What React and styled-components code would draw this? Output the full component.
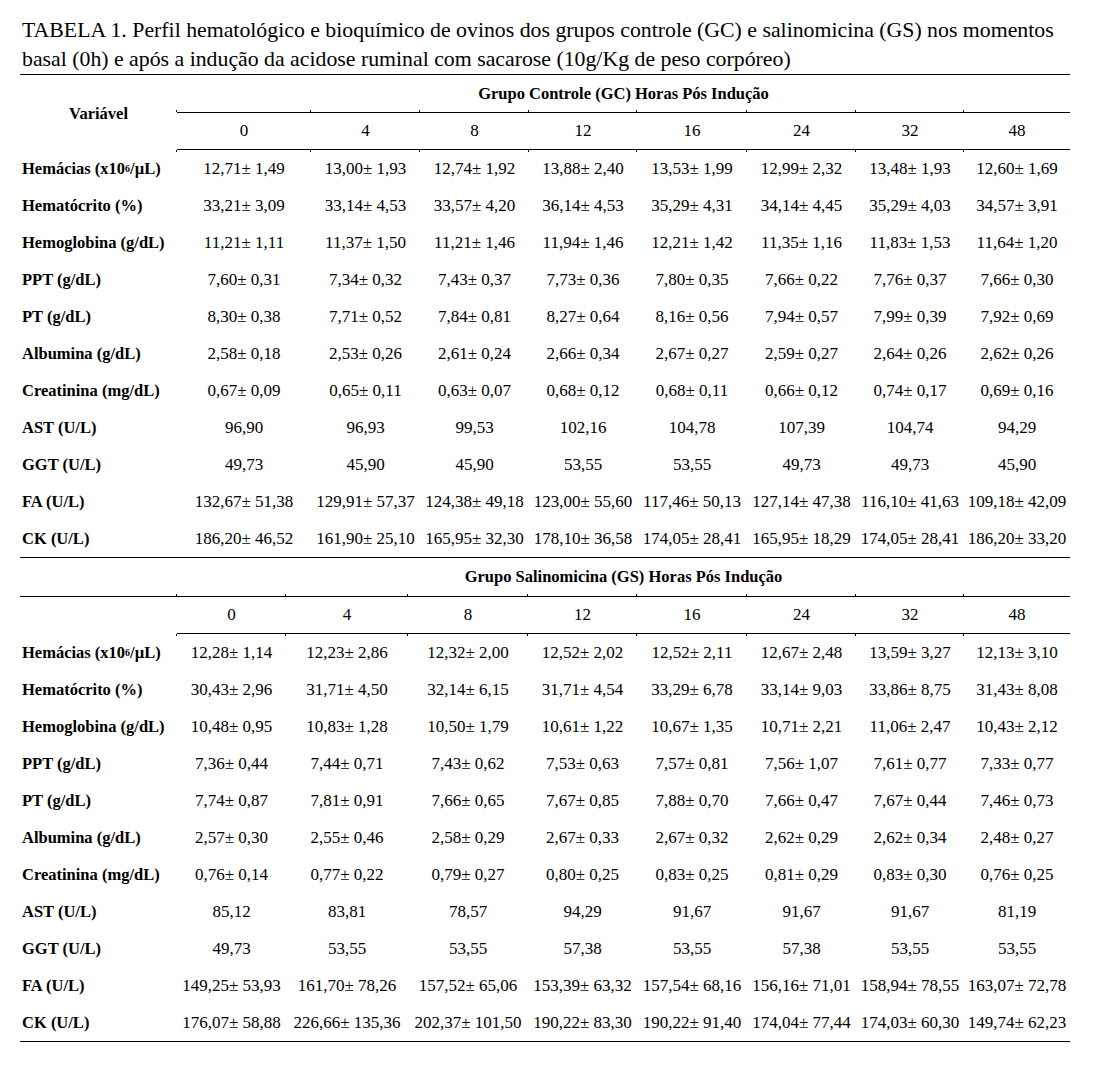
import React from 'react'
import styled, { createGlobalStyle } from 'styled-components'

const GlobalStyle = createGlobalStyle`
  html, body {
    margin: 0;
    padding: 0;
    background: #ffffff;
  }
  body {
    font-family: "Liberation Serif", "Times New Roman", serif;
    color: #000000;
  }
`

const Page = styled.div`
  width: 1050px;
  padding: 16px 25px 30px 20px;
`
const Caption = styled.p`
  margin: 0;
  padding-left: 2px;
  font-size: 21.8px;
  line-height: 29px;
  white-space: nowrap;
`
const Table = styled.div`
  display: grid;
  grid-template-columns: ${p => p.$cols};
  grid-template-rows: ${p => p.$rows};
  border-top: 1px solid #000;
  border-bottom: ${p => (p.$last ? '1px solid #000' : 'none')};
  font-size: 17px;
`
const Cell = styled.div`
  position: relative;
  box-sizing: border-box;
  display: flex;
  align-items: center;
  justify-content: center;
  white-space: nowrap;
  border-bottom: ${p => (p.$rule ? '1px solid #000' : 'none')};
`
// little column marks that Word leaves on the horizontal rules
const HourCell = styled(Cell)`
  &::before,
  &::after {
    content: '';
    position: absolute;
    left: -1px;
    width: 1px;
    height: 2px;
    background: #000;
  }
  &::before { top: -3px; }
  &::after { bottom: -3px; }
`
const LabelCell = styled(Cell)`
  justify-content: flex-start;
  padding-left: 2px;
  font-size: 16.5px;
  font-weight: bold;
`
const VarHead = styled(Cell)`
  grid-row: span 2;
  font-size: 16.5px;
  font-weight: bold;
  padding-top: 2px;
`
const GroupHead = styled(Cell)`
  grid-column: 2 / -1;
  font-size: 16.5px;
  font-weight: bold;
`

const hours = ['0', '4', '8', '12', '16', '24', '32', '48']

const labels = [
  <>Hemácias (x10<sup style={{ fontSize: '0.6em' }}>6</sup>/µL)</>,
  'Hematócrito (%)',
  'Hemoglobina (g/dL)',
  'PPT (g/dL)',
  'PT (g/dL)',
  'Albumina (g/dL)',
  'Creatinina (mg/dL)',
  'AST (U/L)',
  'GGT (U/L)',
  'FA (U/L)',
  'CK (U/L)',
]

const controle = [
  ['12,71± 1,49', '13,00± 1,93', '12,74± 1,92', '13,88± 2,40', '13,53± 1,99', '12,99± 2,32', '13,48± 1,93', '12,60± 1,69'],
  ['33,21± 3,09', '33,14± 4,53', '33,57± 4,20', '36,14± 4,53', '35,29± 4,31', '34,14± 4,45', '35,29± 4,03', '34,57± 3,91'],
  ['11,21± 1,11', '11,37± 1,50', '11,21± 1,46', '11,94± 1,46', '12,21± 1,42', '11,35± 1,16', '11,83± 1,53', '11,64± 1,20'],
  ['7,60± 0,31', '7,34± 0,32', '7,43± 0,37', '7,73± 0,36', '7,80± 0,35', '7,66± 0,22', '7,76± 0,37', '7,66± 0,30'],
  ['8,30± 0,38', '7,71± 0,52', '7,84± 0,81', '8,27± 0,64', '8,16± 0,56', '7,94± 0,57', '7,99± 0,39', '7,92± 0,69'],
  ['2,58± 0,18', '2,53± 0,26', '2,61± 0,24', '2,66± 0,34', '2,67± 0,27', '2,59± 0,27', '2,64± 0,26', '2,62± 0,26'],
  ['0,67± 0,09', '0,65± 0,11', '0,63± 0,07', '0,68± 0,12', '0,68± 0,11', '0,66± 0,12', '0,74± 0,17', '0,69± 0,16'],
  ['96,90', '96,93', '99,53', '102,16', '104,78', '107,39', '104,74', '94,29'],
  ['49,73', '45,90', '45,90', '53,55', '53,55', '49,73', '49,73', '45,90'],
  ['132,67± 51,38', '129,91± 57,37', '124,38± 49,18', '123,00± 55,60', '117,46± 50,13', '127,14± 47,38', '116,10± 41,63', '109,18± 42,09'],
  ['186,20± 46,52', '161,90± 25,10', '165,95± 32,30', '178,10± 36,58', '174,05± 28,41', '165,95± 18,29', '174,05± 28,41', '186,20± 33,20'],
]

const salinomicina = [
  ['12,28± 1,14', '12,23± 2,86', '12,32± 2,00', '12,52± 2,02', '12,52± 2,11', '12,67± 2,48', '13,59± 3,27', '12,13± 3,10'],
  ['30,43± 2,96', '31,71± 4,50', '32,14± 6,15', '31,71± 4,54', '33,29± 6,78', '33,14± 9,03', '33,86± 8,75', '31,43± 8,08'],
  ['10,48± 0,95', '10,83± 1,28', '10,50± 1,79', '10,61± 1,22', '10,67± 1,35', '10,71± 2,21', '11,06± 2,47', '10,43± 2,12'],
  ['7,36± 0,44', '7,44± 0,71', '7,43± 0,62', '7,53± 0,63', '7,57± 0,81', '7,56± 1,07', '7,61± 0,77', '7,33± 0,77'],
  ['7,74± 0,87', '7,81± 0,91', '7,66± 0,65', '7,67± 0,85', '7,88± 0,70', '7,66± 0,47', '7,67± 0,44', '7,46± 0,73'],
  ['2,57± 0,30', '2,55± 0,46', '2,58± 0,29', '2,67± 0,33', '2,67± 0,32', '2,62± 0,29', '2,62± 0,34', '2,48± 0,27'],
  ['0,76± 0,14', '0,77± 0,22', '0,79± 0,27', '0,80± 0,25', '0,83± 0,25', '0,81± 0,29', '0,83± 0,30', '0,76± 0,25'],
  ['85,12', '83,81', '78,57', '94,29', '91,67', '91,67', '91,67', '81,19'],
  ['49,73', '53,55', '53,55', '57,38', '53,55', '57,38', '53,55', '53,55'],
  ['149,25± 53,93', '161,70± 78,26', '157,52± 65,06', '153,39± 63,32', '157,54± 68,16', '156,16± 71,01', '158,94± 78,55', '163,07± 72,78'],
  ['176,07± 58,88', '226,66± 135,36', '202,37± 101,50', '190,22± 83,30', '190,22± 91,40', '174,04± 77,44', '174,03± 60,30', '149,74± 62,23'],
]

const DataRows = ({ rows }) =>
  rows.map((row, i) => (
    <React.Fragment key={i}>
      <LabelCell>{labels[i]}</LabelCell>
      {row.map((v, j) => <Cell key={j}>{v}</Cell>)}
    </React.Fragment>
  ))

export default function App() {
  return (
    <>
      <GlobalStyle />
      <Page>
        <Caption>
          TABELA 1. Perfil hematológico e bioquímico de ovinos dos grupos controle (GC) e salinomicina (GS) nos momentos
          <br />
          basal (0h) e após a indução da acidose ruminal com sacarose (10g/Kg de peso corpóreo)
        </Caption>

        <Table
          $cols="157px 134px 109px 109px 108px 110px 109px 108px 106px"
          $rows="38px 37px repeat(11, 37px)"
        >
          <VarHead>Variável</VarHead>
          <GroupHead $rule>Grupo Controle (GC) Horas Pós Indução</GroupHead>
          {hours.map(h => <HourCell key={h} $rule>{h}</HourCell>)}
          <DataRows rows={controle} />
        </Table>

        <Table
          $last
          $cols="157px 109px 122px 120px 109px 110px 109px 108px 106px"
          $rows="39px 37px repeat(11, 37px)"
        >
          <Cell $rule />
          <GroupHead $rule>Grupo Salinomicina (GS) Horas Pós Indução</GroupHead>
          <Cell />
          {hours.map(h => <HourCell key={h} $rule>{h}</HourCell>)}
          <DataRows rows={salinomicina} />
        </Table>
      </Page>
    </>
  )
}
